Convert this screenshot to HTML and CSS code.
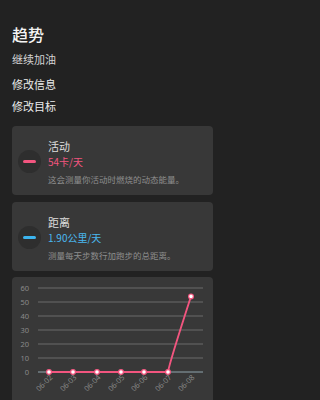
FILE: index.html
```html
<!DOCTYPE html>
<html lang="zh-CN">
<head>
<meta charset="utf-8">
<link rel="stylesheet" href="styles.css">
</head>
<body>
<div class="page">
  <header class="head">
    <h1 class="title">趋势</h1>
    <p class="sub">继续加油</p>
    <a class="link link-first">修改信息</a>
    <a class="link link-second">修改目标</a>
  </header>

  <section class="card metric">
    <div class="badge"><span class="dash dash-pink"></span></div>
    <div class="info">
      <div class="name">活动</div>
      <div class="value value-pink">54卡/天</div>
      <div class="desc">这会测量你活动时燃烧的动态能量。</div>
    </div>
  </section>

  <section class="card metric">
    <div class="badge"><span class="dash dash-blue"></span></div>
    <div class="info">
      <div class="name">距离</div>
      <div class="value value-blue">1.90公里/天</div>
      <div class="desc">测量每天步数行加跑步的总距离。</div>
    </div>
  </section>

  <section class="card chart">
    <svg class="plot" width="201" height="130" viewBox="0 0 201 130">
      <g class="grid">
        <line x1="26" y1="11" x2="191" y2="11"/>
        <line x1="26" y1="25" x2="191" y2="25"/>
        <line x1="26" y1="39" x2="191" y2="39"/>
        <line x1="26" y1="53" x2="191" y2="53"/>
        <line x1="26" y1="67" x2="191" y2="67"/>
        <line x1="26" y1="81" x2="191" y2="81"/>
      </g>
      <line class="axis" x1="26" y1="95" x2="191" y2="95"/>
      <g class="ylab">
        <text x="17" y="13.5">60</text>
        <text x="17" y="27.5">50</text>
        <text x="17" y="41.5">40</text>
        <text x="17" y="55.5">30</text>
        <text x="17" y="69.5">20</text>
        <text x="17" y="83.5">10</text>
        <text x="17" y="97.5">0</text>
      </g>
      <path class="line" d="M37 95 L156 95 C157 89 172 41 179 19.4"/>
      <g class="dots">
        <circle cx="37" cy="95" r="2.4"/>
        <circle cx="61" cy="95" r="2.4"/>
        <circle cx="85" cy="95" r="2.4"/>
        <circle cx="109" cy="95" r="2.4"/>
        <circle cx="132" cy="95" r="2.4"/>
        <circle cx="156" cy="95" r="2.4"/>
        <circle cx="179" cy="19.4" r="2.4"/>
      </g>
      <g class="xlab">
        <text transform="translate(41 101) rotate(-45)">06-02</text>
        <text transform="translate(65 101) rotate(-45)">06-03</text>
        <text transform="translate(89 101) rotate(-45)">06-04</text>
        <text transform="translate(113 101) rotate(-45)">06-05</text>
        <text transform="translate(136 101) rotate(-45)">06-06</text>
        <text transform="translate(160 101) rotate(-45)">06-07</text>
        <text transform="translate(183 101) rotate(-45)">06-08</text>
      </g>
    </svg>
  </section>
</div>
</body>
</html>
```

FILE: styles.css
```css
* { box-sizing: border-box; }
html, body {
  margin: 0;
  padding: 0;
  background: #222222;
  height: 100%;
  overflow: hidden;
}
body {
  font-family: "Noto Sans CJK SC", "Noto Sans", sans-serif;
  color: #eeeeee;
}
.page {
  width: 225px;
  padding: 0 12px;
}
.head {
  display: flex;
  flex-direction: column;
  padding-top: 24px;
}
.title {
  margin: 0;
  font-size: 16px;
  line-height: 20px;
  font-weight: 500;
  color: #f4f4f4;
}
.sub {
  margin: 7px 0 0;
  font-size: 11px;
  line-height: 16px;
  color: #d4d4d4;
}
.link {
  display: block;
  font-size: 11px;
  line-height: 16px;
  color: #ececec;
}
.link-first { margin-top: 9px; }
.link-second { margin-top: 5.5px; }
.card {
  background: #383838;
  border-radius: 4px;
}
.metric {
  margin-top: 12.5px;
  height: 69px;
  display: flex;
  align-items: center;
  padding: 0 6px;
}
.metric + .metric { margin-top: 6.5px; }
.badge {
  width: 23px;
  height: 23px;
  border-radius: 50%;
  background: #2e2e2e;
  display: flex;
  align-items: center;
  justify-content: center;
  flex: none;
  margin-top: 2px;
}
.dash {
  width: 13px;
  height: 3px;
  border-radius: 1.5px;
}
.dash-pink { background: #f2557f; }
.dash-blue { background: #3cb4ee; }
.info {
  margin-left: 7px;
  align-self: flex-start;
  padding-top: 12px;
}
.name {
  font-size: 11px;
  line-height: 16px;
  color: #dddddd;
}
.value {
  font-size: 10px;
  line-height: 16px;
}
.value-pink { color: #f2557f; }
.value-blue { color: #4ab8f0; }
.desc {
  margin-top: 2px;
  font-size: 8.5px;
  line-height: 14px;
  color: #8e8e8e;
  white-space: nowrap;
}
.chart {
  margin-top: 6px;
  height: 130px;
  overflow: hidden;
}
.plot { display: block; }
.grid line {
  stroke: #6a6a6a;
  stroke-width: 1;
}
.axis {
  stroke: #8fa4ad;
  stroke-width: 1;
}
.ylab text {
  font-family: "Noto Sans", sans-serif;
  font-size: 7.5px;
  fill: #8a8a8a;
  text-anchor: end;
}
.xlab text {
  font-family: "Noto Sans", sans-serif;
  font-size: 7.5px;
  fill: #8a8a8a;
  text-anchor: end;
}
.line {
  fill: none;
  stroke: #f2557f;
  stroke-width: 1.8;
}
.dots circle {
  fill: #ffffff;
  stroke: #f2557f;
  stroke-width: 1.2;
}
```
